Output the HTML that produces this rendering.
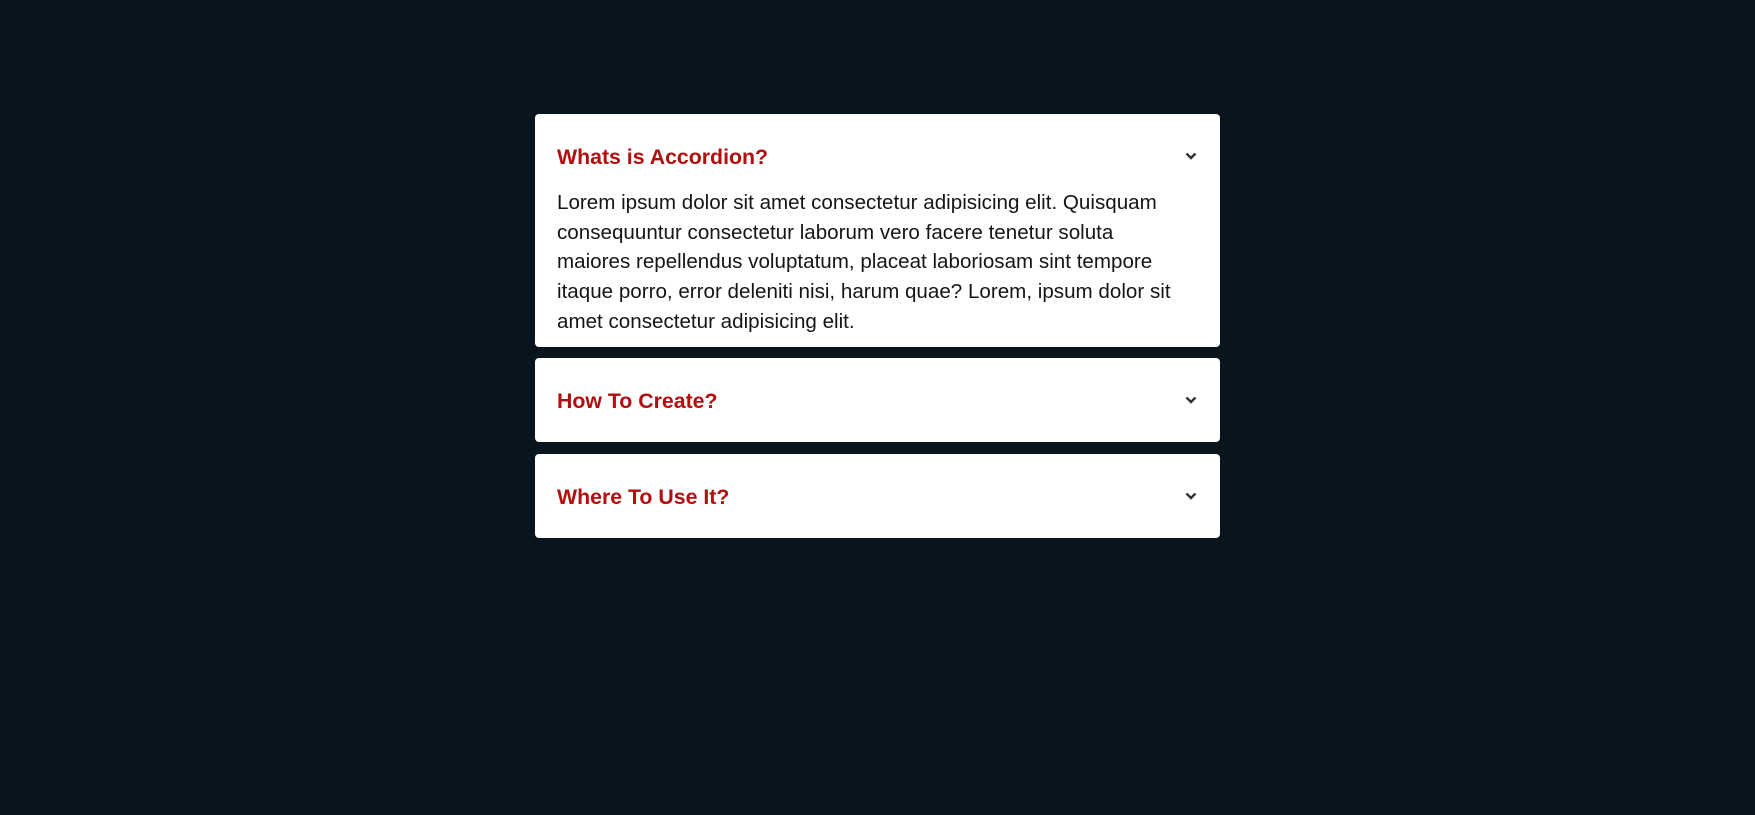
<!DOCTYPE html>
<html><head><style>
html,body{margin:0;padding:0;background:#08141e;width:1755px;height:815px;overflow:hidden;font-family:"Liberation Sans",sans-serif;}
.card{position:absolute;left:535px;width:685px;background:#fff;border-radius:4px;overflow:hidden;}
.hd{position:absolute;left:22px;top:29px;height:28px;line-height:28px;font-size:21.3px;font-weight:bold;color:#b30d0d;white-space:nowrap;}
.chev{position:absolute;right:22px;top:35px;}
.bd{position:absolute;left:22px;top:74px;font-size:20.6px;line-height:29.7px;color:#151515;white-space:nowrap;}
</style></head><body>
<div class="card" style="top:114px;height:233px;">
<div class="hd">Whats is Accordion?</div>
<svg class="chev" width="14" height="14" viewBox="0 0 14 14"><path d="M2.5 4.5 L7 9 L11.5 4.5" fill="none" stroke="#333" stroke-width="2.4"/></svg>
<div class="bd">Lorem ipsum dolor sit amet consectetur adipisicing elit. Quisquam<br>consequuntur consectetur laborum vero facere tenetur soluta<br>maiores repellendus voluptatum, placeat laboriosam sint tempore<br>itaque porro, error deleniti nisi, harum quae? Lorem, ipsum dolor sit<br>amet consectetur adipisicing elit.</div>
</div>
<div class="card" style="top:358px;height:84px;">
<div class="hd">How To Create?</div>
<svg class="chev" width="14" height="14" viewBox="0 0 14 14"><path d="M2.5 4.5 L7 9 L11.5 4.5" fill="none" stroke="#333" stroke-width="2.4"/></svg>
</div>
<div class="card" style="top:454px;height:84px;">
<div class="hd">Where To Use It?</div>
<svg class="chev" width="14" height="14" viewBox="0 0 14 14"><path d="M2.5 4.5 L7 9 L11.5 4.5" fill="none" stroke="#333" stroke-width="2.4"/></svg>
</div>
</body></html>
